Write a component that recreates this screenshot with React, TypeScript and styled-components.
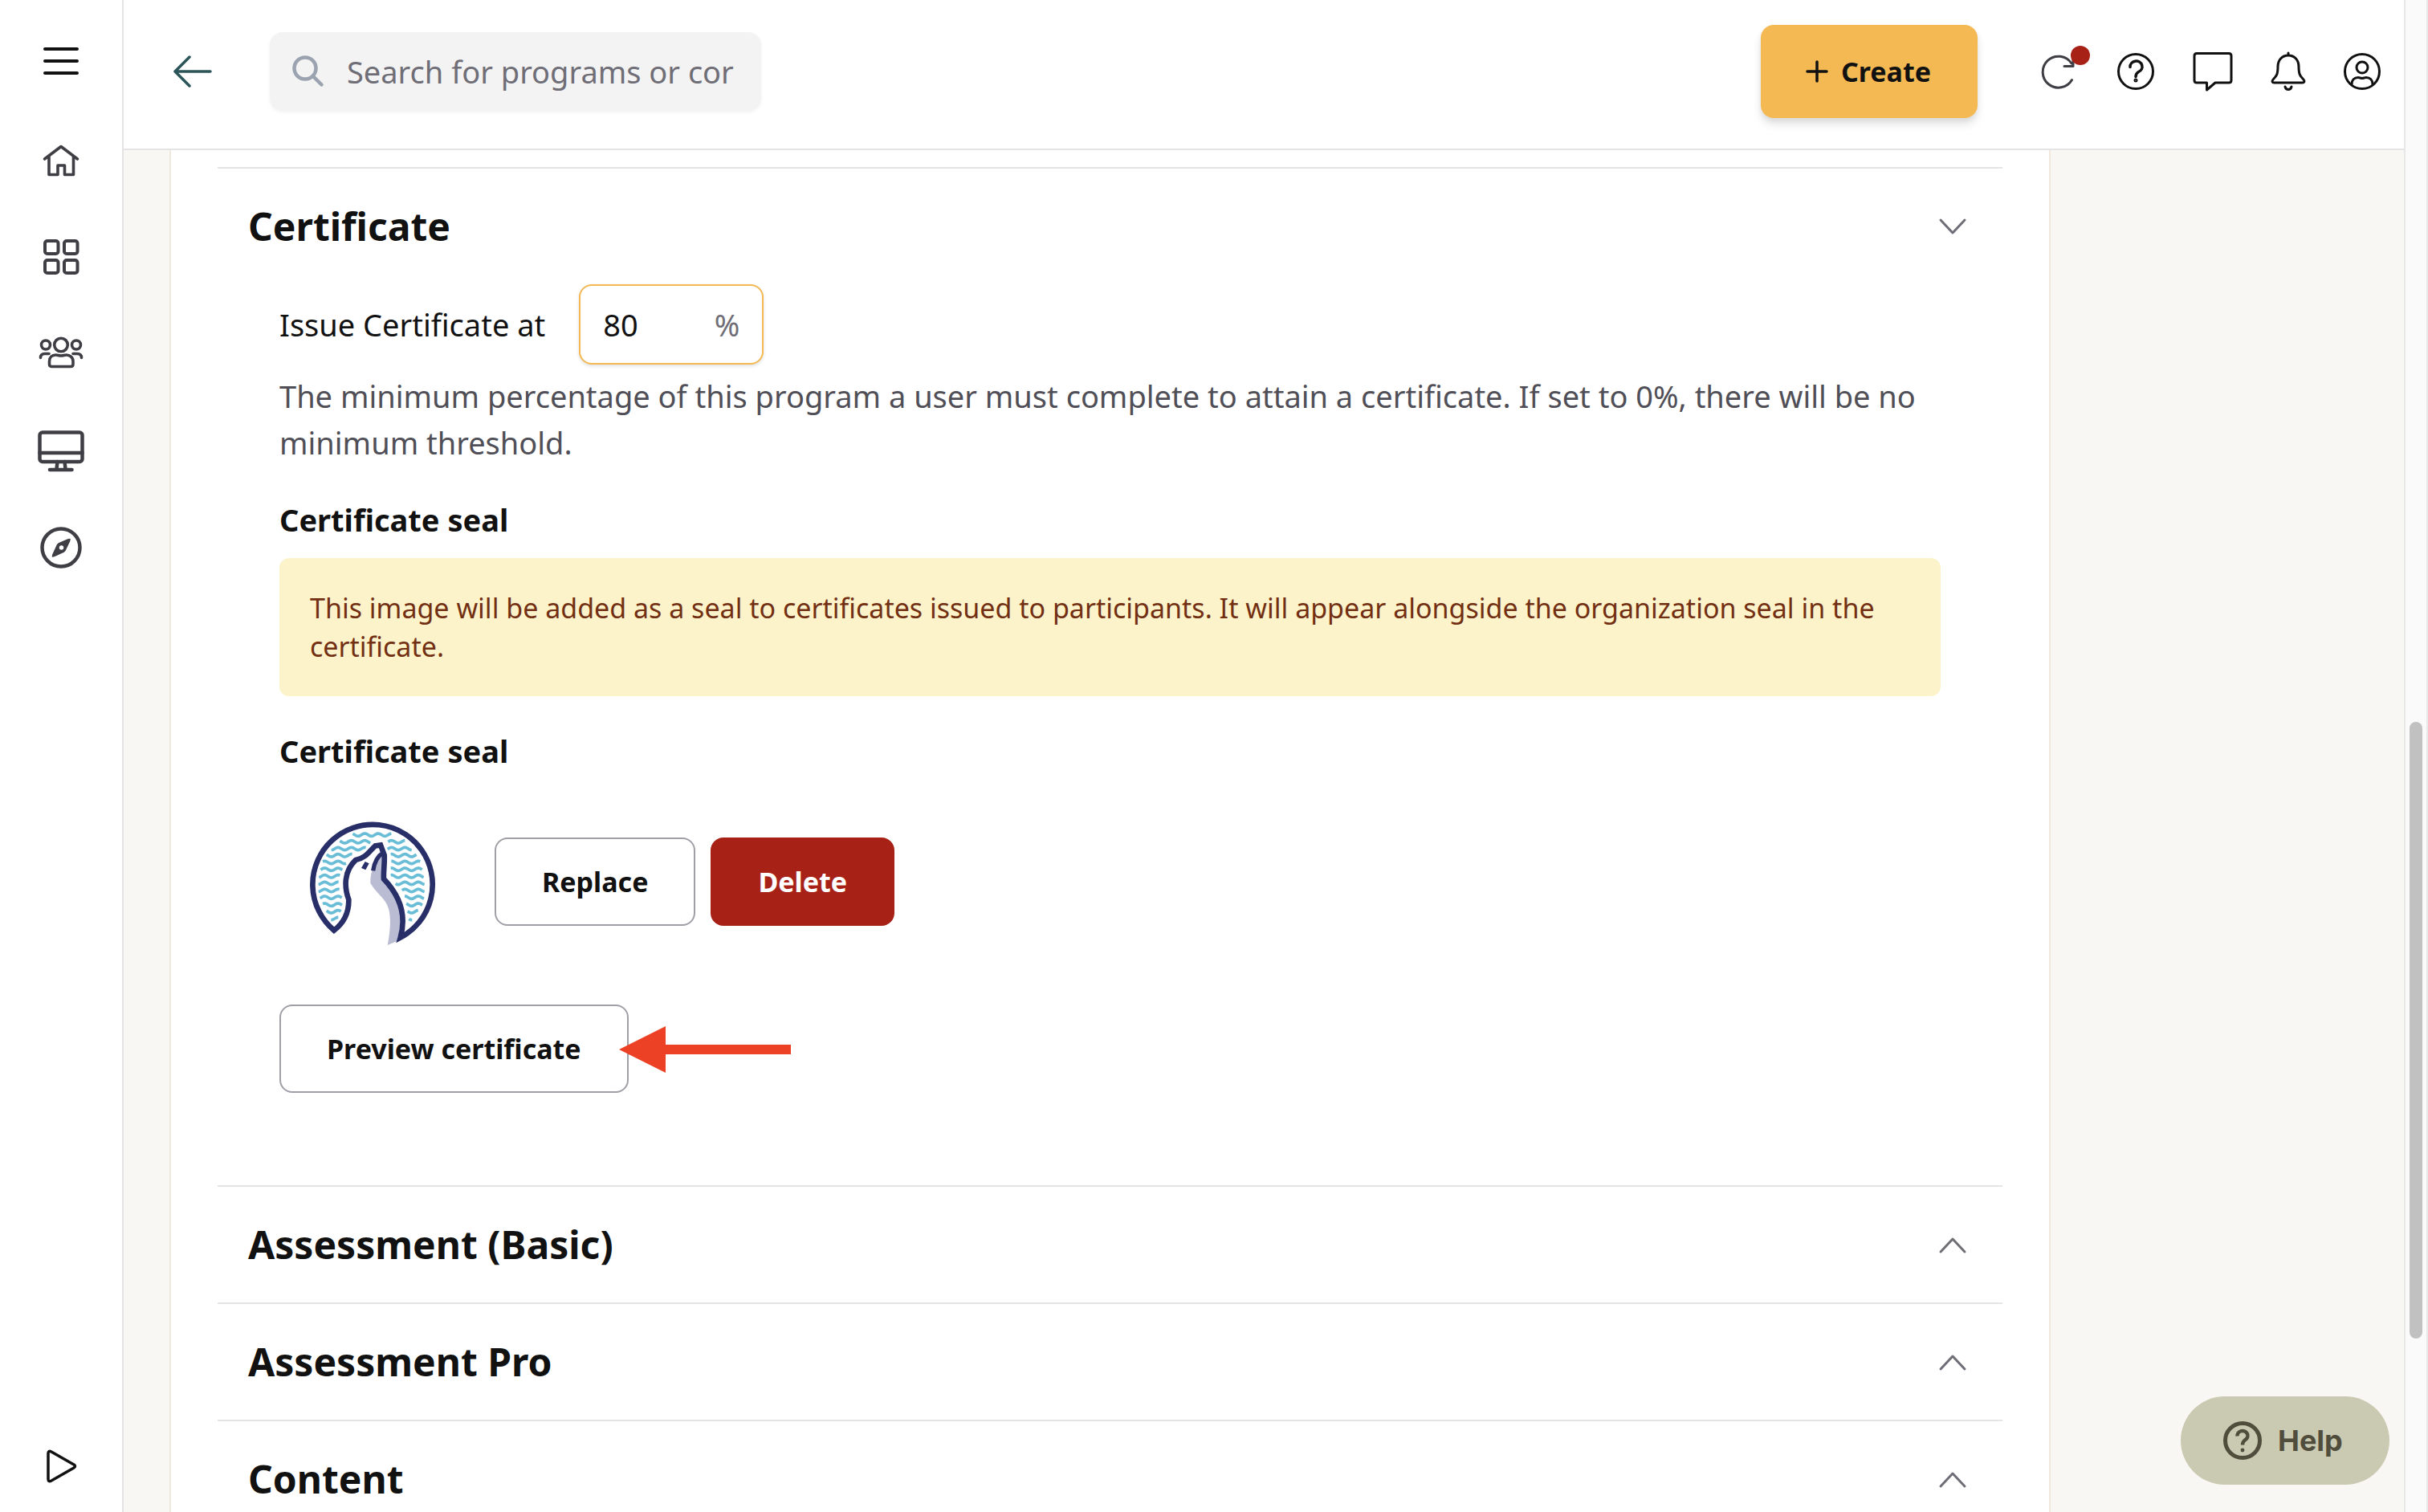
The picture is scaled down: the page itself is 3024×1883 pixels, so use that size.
import React, { useState } from "react";
import styled, { createGlobalStyle, css } from "styled-components";

const GlobalStyle = createGlobalStyle`
  *, *::before, *::after { box-sizing: border-box; }
  body {
    margin: 0;
    background: #f8f7f3;
    color: #111111;
    font-family: "Noto Sans", "Open Sans", sans-serif;
    font-size: 38px;
    line-height: 58px;
  }
  button, input { font: inherit; color: inherit; }
`;

const ink = "#111111";
const slate = "#3f3e45";
const muted = "#6f6e77";
const line = "#e4e4e4";

/* ---------- shell ---------- */

const Shell = styled.div`
  display: flex;
  height: 100vh;
  overflow: hidden;
`;

const Sidebar = styled.nav`
  flex: none;
  width: 154px;
  display: flex;
  flex-direction: column;
  align-items: center;
  padding: 46px 0 28px;
  background: #ffffff;
  border-right: 2px solid ${line};
`;

const NavList = styled.div`
  flex: 1;
  display: flex;
  flex-direction: column;
  gap: 60px;
  margin-top: 64px;
`;

const Column = styled.div`
  flex: 1;
  min-width: 0;
  display: flex;
  flex-direction: column;
`;

const iconButton = css`
  flex: none;
  display: flex;
  align-items: center;
  justify-content: center;
  padding: 0;
  border: 0;
  background: none;
  cursor: pointer;
  text-decoration: none;
`;

const NavButton = styled.button`
  ${iconButton}
  width: 60px;
  height: 60px;
`;

const NavLink = styled.a`
  ${iconButton}
  width: 60px;
  height: 60px;
`;

const Glyph = styled.svg<{ $size?: number; $color?: string }>`
  display: block;
  flex: none;
  width: ${(p) => p.$size ?? 60}px;
  height: ${(p) => p.$size ?? 60}px;
  fill: none;
  stroke: ${(p) => p.$color ?? ink};
  stroke-width: 3;
  stroke-linecap: round;
  stroke-linejoin: round;
`;

/* ---------- header ---------- */

const Header = styled.header`
  flex: none;
  display: flex;
  align-items: center;
  height: 187px;
  padding: 0 25px 7px 58px;
  background: #ffffff;
  border-bottom: 2px solid ${line};
`;

const Search = styled.label`
  display: flex;
  align-items: center;
  gap: 26px;
  width: 612px;
  height: 98px;
  margin-left: 70px;
  padding: 0 28px 0 26px;
  border-radius: 16px;
  background: #f3f3f3;
  box-shadow: 0 2px 4px rgba(0, 0, 0, 0.05);
`;

const SearchInput = styled.input`
  flex: 1;
  min-width: 0;
  padding: 0;
  border: 0;
  outline: 0;
  background: none;
  &::placeholder {
    color: ${muted};
    opacity: 1;
  }
`;

const HeaderActions = styled.div`
  display: flex;
  align-items: center;
  gap: 38px;
  margin-left: auto;
`;

const CreateButton = styled.button`
  display: flex;
  align-items: center;
  gap: 16px;
  height: 116px;
  margin-right: 34px;
  padding: 0 58px 0 56px;
  border: 0;
  border-radius: 16px;
  background: #f4b953;
  box-shadow: 0 8px 12px rgba(0, 0, 0, 0.1), 0 4px 6px rgba(0, 0, 0, 0.06);
  font-size: 34px;
  font-weight: 700;
  line-height: 48px;
  cursor: pointer;
`;

const HeaderButton = styled.button<{ $wide?: boolean }>`
  ${iconButton}
  position: relative;
  width: ${(p) => (p.$wide ? 58 : 54)}px;
  height: 60px;
`;

const Badge = styled.span`
  position: absolute;
  top: -2px;
  right: -10px;
  width: 24px;
  height: 24px;
  border-radius: 50%;
  background: #a72116;
`;

/* ---------- page ---------- */

const Page = styled.main`
  flex: 1;
  min-height: 0;
  overflow: hidden;
  padding: 0 440px 0 57px;
`;

const Card = styled.div`
  padding: 21px 58px 0;
  background: #ffffff;
  border: 2px solid #f0e8dc;
  border-width: 0 2px;
`;

const Section = styled.section`
  border-top: 2px solid ${line};
`;

const SectionTitle = styled.h2`
  margin: 0;
  font-size: 48px;
  font-weight: 700;
  line-height: 72px;
`;

const SectionToggle = styled.button`
  display: flex;
  align-items: center;
  justify-content: space-between;
  width: 100%;
  height: 144px;
  padding: 0 38px;
  border: 0;
  background: none;
  font-weight: inherit;
  cursor: pointer;
`;

const SectionBody = styled.div`
  padding: 0 77px 115px;
`;

const FieldRow = styled.div`
  display: flex;
  align-items: center;
  gap: 42px;
`;

const PercentField = styled.div`
  display: flex;
  align-items: center;
  width: 230px;
  height: 100px;
  padding: 0 28px;
  border: 2px solid #f4b953;
  border-radius: 16px;
  background: #ffffff;
  box-shadow: 0 2px 4px rgba(0, 0, 0, 0.12);
`;

const PercentInput = styled.input`
  flex: 1;
  min-width: 0;
  padding: 0;
  border: 0;
  outline: 0;
  background: none;
`;

const PercentSign = styled.span`
  color: ${muted};
`;

const Hint = styled.p`
  margin: 10px 0 38px;
  color: #504f57;
`;

const Subheading = styled.h3`
  margin: 0;
  font-size: 38px;
  font-weight: 700;
  line-height: 58px;
`;

const Notice = styled.p`
  margin: 19px 0 39px;
  padding: 38px;
  border-radius: 12px;
  background: #fcf3ca;
  color: #722f12;
  font-size: 34px;
  line-height: 48px;
`;

const SealRow = styled.div`
  display: flex;
  align-items: center;
  gap: 19px;
  margin: 19px 0 38px;
`;

const SealFrame = styled.svg`
  display: block;
  width: 230px;
  height: 230px;
  margin-right: 19px;
`;

const ActionButton = styled.button<{ $danger?: boolean }>`
  height: 110px;
  padding: 0 57px;
  border: 2px solid ${(p) => (p.$danger ? "#a72116" : "#a09fa8")};
  border-radius: 16px;
  background: ${(p) => (p.$danger ? "#a72116" : "#ffffff")};
  color: ${(p) => (p.$danger ? "#ffffff" : ink)};
  font-size: 34px;
  font-weight: 700;
  line-height: 48px;
  cursor: pointer;
`;

const PreviewRow = styled.div`
  display: flex;
  width: fit-content;
  position: relative;
`;

const Pointer = styled.svg`
  position: absolute;
  left: 100%;
  top: 50%;
  width: 214px;
  height: 58px;
  margin: -28px 0 0 -12px;
  pointer-events: none;
`;

/* ---------- overlays ---------- */

const ScrollTrack = styled.div`
  flex: none;
  display: flex;
  flex-direction: column;
  align-items: center;
  width: 30px;
  background: #fafafa;
  border: solid #e8e8e8;
  border-width: 0 2px;
  &::before { content: ""; flex: 899; }
  &::after { content: ""; flex: 216; }
`;

const ScrollThumb = styled.div`
  flex: 768;
  width: 16px;
  border-radius: 8px;
  background: #c1c1c1;
`;

const HelpButton = styled.button`
  position: fixed;
  right: 48px;
  bottom: 34px;
  display: flex;
  align-items: center;
  gap: 16px;
  width: 260px;
  height: 110px;
  padding: 0 0 0 49px;
  border: 0;
  border-radius: 55px;
  background: #cacab2;
  color: #504d3c;
  font-family: Inter, "Liberation Sans", sans-serif;
  font-size: 36px;
  font-weight: 700;
  cursor: pointer;
`;

/* ---------- drawings ---------- */

const wavePath = (from: number, to: number, y: number) => {
  const points: string[] = [];
  for (let x = from; x <= to; x += 3) {
    points.push(`${x} ${(y - 5 * Math.cos(((x - 283) / 50) * 2 * Math.PI)).toFixed(1)}`);
  }
  return `M${points.join("L")}`;
};

const waves: [number, number, number][] = [
  [238, 384, 116],
  [190, 304, 142], [370, 434, 142],
  [158, 288, 168], [368, 458, 168],
  [140, 236, 193], [380, 478, 193],
  [126, 214, 219], [382, 490, 219],
  [118, 200, 245], [380, 498, 245],
  [112, 190, 271], [380, 505, 271],
  [110, 187, 297], [398, 508, 297],
  [110, 190, 324], [422, 508, 324],
  [116, 198, 350], [432, 504, 350],
  [126, 200, 377], [438, 498, 377],
  [140, 194, 403], [443, 484, 403],
  [157, 184, 429], [448, 462, 429],
];

const Seal = () => (
  <SealFrame viewBox="-36 -54 690 690" role="img" aria-label="Dolphin seal" fill="none">
    {waves.map(([a, b, y]) => (
      <path key={`${a}-${y}`} d={wavePath(a, b, y)} stroke="#69bdd6" strokeWidth="11" />
    ))}
    <path
      d="M348 190C322 215 303 250 304 296C325 335 366 355 374 400C382 440 376 490 368 528L402 514C430 440 420 350 352 284Z"
      fill="#b9bcd2"
    />
    <path
      d="M168 473A224 224 0 1 1 416 500C436 430 425 355 354 281C352 255 358 220 356 192L342 154L322 157C300 178 285 204 249 210C204 252 206 312 223 358C224 412 203 446 168 473Z"
      stroke="#282e67"
      strokeWidth="20"
    />
    <path d="M402 517L434 494L416 480Z" fill="#282e67" />
    <path d="M314 250C318 220 330 196 352 182" stroke="#282e67" strokeWidth="16" />
    <path d="M284 216L299 223L286 247L270 240Z" fill="#282e67" />
  </SealFrame>
);

const Chevron = ({ open }: { open: boolean }) => (
  <Glyph viewBox="0 0 48 48" $size={48} $color={muted} aria-hidden>
    <path d={open ? "M9 16L24 32L39 16" : "M9 33L24 17L39 33"} />
  </Glyph>
);

const CollapsedSection = ({ title }: { title: string }) => (
  <Section>
    <SectionTitle>
      <SectionToggle type="button" aria-expanded={false}>
        {title}
        <Chevron open={false} />
      </SectionToggle>
    </SectionTitle>
  </Section>
);

export default function App() {
  const [percent, setPercent] = useState("80");

  return (
    <>
      <GlobalStyle />
      <Shell>
        <Sidebar aria-label="Main">
          <NavButton type="button" aria-label="Menu">
            <Glyph viewBox="0 0 60 60">
              <path d="M10 15H50M10 30H50M10 45H50" strokeWidth="4" />
            </Glyph>
          </NavButton>
          <NavList>
            <NavLink href="#home" aria-label="Home">
              <Glyph viewBox="0 0 60 60" $color={slate}>
                <path d="M9.500 28L30 12.500L50.500 28M15 25V47.500H26V36H34.500V47.500H45.500V25" strokeWidth="3.600" />
              </Glyph>
            </NavLink>
            <NavLink href="#programs" aria-label="Programs">
              <Glyph viewBox="0 0 60 60" $color={slate}>
                <g strokeWidth="4">
                  <rect x="10" y="10" width="16.500" height="16" rx="3" />
                  <rect x="34" y="10" width="16.500" height="16" rx="3" />
                  <rect x="10" y="34" width="16.500" height="16" rx="3" />
                  <rect x="34" y="34" width="16.500" height="16" rx="3" />
                </g>
              </Glyph>
            </NavLink>
            <NavLink href="#people" aria-label="People">
              <Glyph viewBox="0 0 60 60" $color={slate}>
                <g strokeWidth="3.600">
                  <circle cx="30" cy="19.500" r="8.300" />
                  <circle cx="11" cy="19.500" r="5.500" />
                  <circle cx="49" cy="19.500" r="5.500" />
                  <path d="M15.500 43.500V40C15.500 35 19 32 23.500 32C26 32 27 33 30 33S34 32 36.500 32C41 32 45 35 45 40V43.500Q45 46.500 42 46.500H18.500Q15.500 46.500 15.500 43.500Z" />
                  <path d="M4.500 35.500C4.500 32 7 30.500 10 30.500H15M55.500 35.500C55.500 32 53 30.500 50 30.500H45" />
                </g>
              </Glyph>
            </NavLink>
            <NavLink href="#devices" aria-label="Screens">
              <Glyph viewBox="0 0 60 60" $color={slate}>
                <g strokeWidth="4.500">
                  <rect x="3.500" y="8.500" width="53" height="36.500" rx="3.500" />
                  <path d="M3.500 34H56.500M25.500 45L24.500 54M34.500 45L35.500 54M16 55H43.500" />
                </g>
              </Glyph>
            </NavLink>
            <NavLink href="#discover" aria-label="Discover">
              <Glyph viewBox="0 0 60 60" $color={slate}>
                <circle cx="30" cy="32" r="23.500" strokeWidth="4.500" />
                <path
                  d="M38.500 22L41 21.500L40.500 24L35 35.500L33.500 37L21.500 42.500L19.500 43L20 40.500L25.500 28.500L27 27ZM30.500 28.500A3.500 3.500 0 1 0 30.500 35.500A3.500 3.500 0 1 0 30.500 28.500Z"
                  fill={slate}
                  fillRule="evenodd"
                  strokeWidth="1.500"
                />
              </Glyph>
            </NavLink>
          </NavList>
          <NavButton type="button" aria-label="Play">
            <Glyph viewBox="0 0 60 60">
              <path d="M14 15Q14 11 18 13L46 29Q49 31 46 33L18 49Q14 51 14 47Z" strokeWidth="3.500" />
            </Glyph>
          </NavButton>
        </Sidebar>

        <Column>
          <Header>
            <HeaderButton type="button" aria-label="Back">
              <Glyph viewBox="0 0 60 60" $color="#2b5559">
                <path d="M53 30H9.500M27 12L9 30L27 48" strokeWidth="3.500" />
              </Glyph>
            </HeaderButton>
            <Search>
              <Glyph viewBox="0 0 44 44" $size={44} $color="#9ca3b0" aria-hidden>
                <g strokeWidth="4.500">
                  <circle cx="18" cy="18" r="13.500" />
                  <path d="M28 28L38.500 38.500" />
                </g>
              </Glyph>
              <SearchInput type="text" aria-label="Search" placeholder="Search for programs or cor" />
            </Search>
            <HeaderActions>
              <CreateButton type="button">
                <Glyph viewBox="0 0 28 28" $size={28} aria-hidden>
                  <path d="M14 2V26M2 14H26" strokeWidth="3.500" />
                </Glyph>
                Create
              </CreateButton>
              <HeaderButton type="button" $wide aria-label="Sync">
                <Glyph viewBox="0 0 60 60" $color={slate}>
                  <path d="M48 14V23.500H37M46 20A19.500 19.500 0 1 0 46.500 40.500" />
                </Glyph>
                <Badge />
              </HeaderButton>
              <HeaderButton type="button" $wide aria-label="Support">
                <Glyph viewBox="0 0 60 60">
                  <circle cx="30" cy="30" r="21.500" />
                  <path d="M23 24.500A7.500 7 0 1 1 33.500 30.500Q30 32.500 30 36.500" strokeWidth="3.500" />
                  <circle cx="30" cy="41" r="1" />
                </Glyph>
              </HeaderButton>
              <HeaderButton type="button" $wide aria-label="Messages">
                <Glyph viewBox="0 0 60 60">
                  <path d="M10 7.500H50Q53 7.500 53 10.500V41Q53 44 50 44H33L22.500 53V44H10Q7 44 7 41V10.500Q7 7.500 10 7.500Z" />
                </Glyph>
              </HeaderButton>
              <HeaderButton type="button" aria-label="Notifications">
                <Glyph viewBox="0 0 60 60">
                  <path d="M30 7V10M30 10C22 10 17 16 17 24C17 34 15 36 11.500 39.500C9 42 10 44 12.500 44H47.500C50 44 51 42 48.500 39.500C45 36 43 34 43 24C43 16 38 10 30 10ZM26 49Q27 52.500 30 52.500T34 49" />
                </Glyph>
              </HeaderButton>
              <HeaderButton type="button" aria-label="Account">
                <Glyph viewBox="0 0 60 60">
                  <circle cx="30" cy="30" r="21.500" />
                  <circle cx="30" cy="25" r="7" />
                  <path d="M17 46C17 41 20 37.500 25 37.500C27 37.500 28 38.500 30 38.500S33 37.500 35 37.500C40 37.500 43 41 43 46" />
                </Glyph>
              </HeaderButton>
            </HeaderActions>
          </Header>

          <Page>
            <Card>
              <Section>
                <SectionTitle>
                  <SectionToggle type="button" aria-expanded>
                    Certificate
                    <Chevron open />
                  </SectionToggle>
                </SectionTitle>
                <SectionBody>
                  <FieldRow>
                    <label htmlFor="issue-at">Issue Certificate at</label>
                    <PercentField>
                      <PercentInput
                        id="issue-at"
                        type="text"
                        inputMode="numeric"
                        value={percent}
                        onChange={(e) => setPercent(e.target.value)}
                      />
                      <PercentSign>%</PercentSign>
                    </PercentField>
                  </FieldRow>
                  <Hint>
                    The minimum percentage of this program a user must complete to attain a certificate. If set to 0%,
                    there will be no minimum threshold.
                  </Hint>
                  <Subheading>Certificate seal</Subheading>
                  <Notice>
                    This image will be added as a seal to certificates issued to participants. It will appear alongside
                    the organization seal in the certificate.
                  </Notice>
                  <Subheading>Certificate seal</Subheading>
                  <SealRow>
                    <Seal />
                    <ActionButton type="button">Replace</ActionButton>
                    <ActionButton type="button" $danger>
                      Delete
                    </ActionButton>
                  </SealRow>
                  <PreviewRow>
                    <ActionButton type="button">Preview certificate</ActionButton>
                    <Pointer viewBox="0 0 214 58" aria-hidden>
                      <path d="M0 29L58 0V23H214V35H58V58Z" fill="#ec4125" />
                    </Pointer>
                  </PreviewRow>
                </SectionBody>
              </Section>
              <CollapsedSection title="Assessment (Basic)" />
              <CollapsedSection title="Assessment Pro" />
              <CollapsedSection title="Content" />
            </Card>
          </Page>
        </Column>

        <ScrollTrack aria-hidden>
          <ScrollThumb />
        </ScrollTrack>
      </Shell>

      <HelpButton type="button">
        <Glyph viewBox="0 0 56 56" $size={56} $color="#504d3c" aria-hidden>
          <circle cx="28" cy="28" r="21.500" strokeWidth="5" />
          <path d="M21.500 22.500A6.500 6 0 1 1 31.500 27Q28 29.500 28 33.500" strokeWidth="4.500" strokeLinecap="butt" />
          <circle cx="28" cy="40" r="1.200" strokeWidth="2.500" fill="#504d3c" />
        </Glyph>
        Help
      </HelpButton>
    </>
  );
}
